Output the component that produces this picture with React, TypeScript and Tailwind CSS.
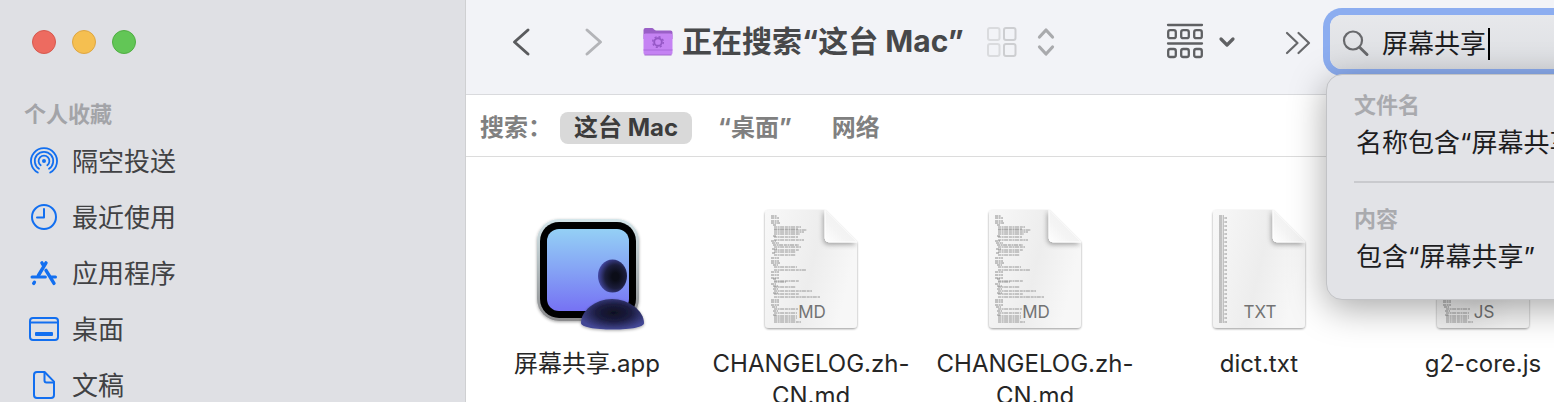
import { useState } from "react";
import type { ReactNode } from "react";
import { clsx } from "clsx";

type FileKind = "MD" | "TXT" | "JS";

const favorites = [
  { id: "airdrop", name: "隔空投送", icon: <AirDropIcon /> },
  { id: "recents", name: "最近使用", icon: <ClockIcon /> },
  { id: "apps", name: "应用程序", icon: <AppsIcon /> },
  { id: "desktop", name: "桌面", icon: <DesktopIcon /> },
  { id: "documents", name: "文稿", icon: <DocumentIcon /> },
];

const scopes = ["这台 Mac", "“桌面”", "网络"];

const files: { id: number; name: string; kind?: FileKind }[] = [
  { id: 1, name: "屏幕共享.app" },
  { id: 2, name: "CHANGELOG.zh-CN.md", kind: "MD" },
  { id: 3, name: "CHANGELOG.zh-CN.md", kind: "MD" },
  { id: 4, name: "dict.txt", kind: "TXT" },
  { id: 5, name: "g2-core.js", kind: "JS" },
];

// [x, y, width] of every line in the page preview
const mdLines = [
  [6, 6, 6], [6, 8, 8], [6, 11, 8], [6, 13, 9], [8, 15, 3],
  [9, 17, 27], [9, 19, 24], [9, 20, 33], [9, 22, 30], [9, 24, 26], [8, 26, 3],
  [9, 27, 24], [9, 30, 30], [6, 31, 5], [7, 33, 7], [8, 35, 26], [9, 37, 27],
  [7, 39, 5], [9, 40, 25], [9, 42, 22], [7, 43, 3], [9, 45, 22],
  [6, 48, 8], [6, 51, 8], [6, 53, 9], [8, 55, 5], [9, 57, 23], [9, 60, 32],
  [6, 62, 8], [6, 65, 8], [6, 68, 8], [8, 69, 3], [9, 71, 25], [9, 72, 12], [6, 74, 5],
  [8, 76, 5], [9, 77, 22], [8, 79, 5], [9, 81, 38], [8, 83, 5], [9, 84, 25], [9, 87, 46],
  [6, 90, 8], [6, 92, 8], [6, 95, 8], [7, 97, 5], [9, 99, 24], [8, 101, 5],
  [9, 103, 23], [8, 105, 4], [9, 106, 23], [9, 108, 23], [9, 110, 22], [9, 112, 27],
];

function AirDropIcon() {
  return (
    <svg viewBox="0 0 30 30" className="size-[30px]" fill="none" stroke="currentColor" strokeWidth="1.8" strokeLinecap="round">
      <path d="M8.800 26.500a13 13 0 1 1 12.400 0" />
      <path d="M10 22.700a9.200 9.200 0 1 1 10 0" />
      <path d="M11.700 19.300a5.400 5.400 0 1 1 6.600 0" />
      <circle cx="15" cy="15" r="2" fill="currentColor" stroke="none" />
    </svg>
  );
}

function ClockIcon() {
  return (
    <svg viewBox="0 0 30 30" className="size-[30px]" fill="none" stroke="currentColor" strokeWidth="2" strokeLinecap="round" strokeLinejoin="round">
      <circle cx="15" cy="15" r="12" />
      <path d="M15 7v8.600H8" />
    </svg>
  );
}

function AppsIcon() {
  return (
    <svg viewBox="0 0 30 30" className="size-[30px]" fill="none" stroke="currentColor" strokeWidth="3.400" strokeLinecap="round">
      <path d="M12.900 4.900l2 3.200M17 4.900L9.400 17.500" />
      <path d="M3 19h13.400" strokeWidth="3" />
      <path d="M17 12.400l8 13" />
      <path d="M22.500 19H26.500" strokeWidth="3" />
      <path d="M5.400 24.300l-.7 1.100" />
    </svg>
  );
}

function DesktopIcon() {
  return (
    <svg viewBox="0 0 30 30" className="size-[30px]" fill="none" stroke="currentColor" strokeWidth="2">
      <rect x="1" y="4" width="28" height="22" rx="3" />
      <path d="M1 8.500h28" />
      <rect x="6" y="18" width="18" height="4" rx="1" fill="currentColor" stroke="none" />
    </svg>
  );
}

function DocumentIcon() {
  return (
    <svg viewBox="0 0 30 30" className="size-[30px]" fill="none" stroke="currentColor" strokeWidth="2" strokeLinejoin="round">
      <path d="M15.600 2H8a3 3 0 0 0-3 3v20a3 3 0 0 0 3 3h14a3 3 0 0 0 3-3V11.600z" />
      <path d="M15.500 2v8.500a2 2 0 0 0 2 2H25" />
    </svg>
  );
}

function FolderIcon() {
  return (
    <svg viewBox="0 0 32 30" className="h-[30px] w-8 shrink-0">
      <path d="M1.500 3a2 2 0 0 1 2-2h6.500c1.500 0 2.200 2.400 4 2.400h14.500a2 2 0 0 1 2 2V12h-29z" fill="#9a5fc7" />
      <rect x="1.500" y="6.500" width="29" height="21.500" rx="2" fill="#c583f3" />
      <path d="M1.500 23h29" stroke="#aa6bdb" strokeWidth="1" />
      <path d="M2.500 28h27" stroke="#a46bce" strokeWidth="1" />
      <circle cx="16" cy="15" r="3.800" fill="none" stroke="#9557c6" strokeWidth="1.900" />
      <circle cx="16" cy="15" r="5.300" fill="none" stroke="#9557c6" strokeWidth="1.400" strokeDasharray="2.080 2.080" />
    </svg>
  );
}

function ScreenSharingIcon() {
  return (
    <svg viewBox="0 0 128 128" className="size-32">
      <defs>
        <linearGradient id="frame" x1="0" y1="0" x2="0" y2="1">
          <stop offset="0" stopColor="#d5e6ea" />
          <stop offset="1" stopColor="#8b8b8d" />
        </linearGradient>
        <linearGradient id="screen" x1="0" y1="0" x2="0" y2="1">
          <stop offset="0" stopColor="#94d0f5" />
          <stop offset="0.500" stopColor="#85a3f5" />
          <stop offset="1" stopColor="#7672f4" />
        </linearGradient>
        <radialGradient id="head" cx="0.600" cy="0.520" r="0.600">
          <stop offset="0.200" stopColor="#0b0d18" />
          <stop offset="0.600" stopColor="#1b1d3c" />
          <stop offset="1" stopColor="#4549a6" />
        </radialGradient>
        <radialGradient id="body" cx="0.520" cy="0.450" r="0.560">
          <stop offset="0" stopColor="#0f1022" />
          <stop offset="0.500" stopColor="#1c1d42" />
          <stop offset="1" stopColor="#434794" />
        </radialGradient>
        <filter id="drop" x="-20%" y="-20%" width="140%" height="140%">
          <feDropShadow dx="0" dy="1" stdDeviation="1.500" floodOpacity="0.350" />
        </filter>
      </defs>
      <rect x="14" y="13" width="102" height="102" rx="22" fill="url(#frame)" filter="url(#drop)" />
      <rect x="17" y="16" width="96" height="96" rx="19" fill="#000" />
      <rect x="24" y="23" width="82" height="82" rx="12" fill="url(#screen)" />
      <ellipse cx="89.500" cy="70" rx="14.500" ry="16.500" fill="url(#head)" />
      <path d="M58 117c0-12 14-24 31-24s32 12 32 24c0 4-12 6.500-31 6.500S58 121 58 117z" fill="url(#body)" filter="url(#drop)" />
    </svg>
  );
}

function PagePreview({ kind }: { kind: FileKind }) {
  const narrow = Array.from({ length: 54 }, (_, i) => [6, 6 + i * 2, 5 + ((i * i * 3) % 4)]);
  const lines = kind === "TXT" ? narrow : mdLines;

  return (
    <svg viewBox="0 0 100 128" className="h-32 w-[100px]">
      <defs>
        <linearGradient id={`paper-${kind}`} x1="0" y1="0" x2="1" y2="0.300">
          <stop offset="0" stopColor="#f8f8f8" />
          <stop offset="0.600" stopColor="#ededed" />
          <stop offset="1" stopColor="#f7f7f7" />
        </linearGradient>
        <linearGradient id={`fold-${kind}`} x1="0.700" y1="0.300" x2="0" y2="1">
          <stop offset="0" stopColor="#f1f1f1" />
          <stop offset="0.500" stopColor="#f4f4f4" />
          <stop offset="1" stopColor="#ffffff" />
        </linearGradient>
        <filter id={`edge-${kind}`} x="-10%" y="-10%" width="120%" height="120%">
          <feDropShadow dx="0" dy="1" stdDeviation="1" floodOpacity="0.400" />
        </filter>
        <clipPath id={`sheet-${kind}`}>
          <path d="M4 4H64L96 36V122H4z" />
        </clipPath>
        <filter id={`curl-${kind}`} x="-50%" y="-50%" width="200%" height="200%">
          <feDropShadow dx="-1" dy="2" stdDeviation="2.500" floodOpacity="0.350" />
        </filter>
      </defs>
      <path d="M8 4H64L96 36V118a4 4 0 0 1-4 4H8a4 4 0 0 1-4-4V8a4 4 0 0 1 4-4z" fill={`url(#paper-${kind})`} filter={`url(#edge-${kind})`} />
      {lines.map(([x, y, width], index) => (
        <path
          key={index}
          d={`M${x + 4} ${y + 4}h${width}`}
          stroke={x > 8 ? "#808080" : "#757575"}
          strokeWidth="0.800"
          strokeDasharray="3 0.600 2 0.500 4 0.800"
        />
      ))}
      <g clipPath={`url(#sheet-${kind})`}>
        <path d="M64 4L96 36H68a4 4 0 0 1-4-4z" fill={`url(#fold-${kind})`} stroke="#ffffff" filter={`url(#curl-${kind})`} />
      </g>
      <text x="51" y="112" textAnchor="middle" fontSize="17" fill="#737373">
        {kind}
      </text>
    </svg>
  );
}

function ToolButton({ label, className, children }: { label: string; className?: string; children: ReactNode }) {
  return (
    <button type="button" aria-label={label} className={clsx("flex shrink-0 items-center", className)}>
      {children}
    </button>
  );
}

function Sidebar() {
  return (
    <aside className="w-[466px] shrink-0 border-r border-[#cfd0d2] bg-[#dfe0e4]">
      <div className="flex gap-4 px-8 pt-[30px]">
        <button type="button" aria-label="关闭" className="size-6 rounded-full border border-[#d6594e] bg-[#ed6b60]" />
        <button type="button" aria-label="最小化" className="size-6 rounded-full border border-[#dea642] bg-[#f5bf50]" />
        <button type="button" aria-label="缩放" className="size-6 rounded-full border border-[#50ae43] bg-[#62c656]" />
      </div>
      <h2 className="mt-11 px-6 text-[22px] leading-8 font-bold text-[#a3a4a8]">个人收藏</h2>
      <nav className="mt-[3px]">
        {favorites.map((item) => (
          <a key={item.id} href={`#${item.id}`} className="flex h-14 items-center gap-[13px] px-[29px] text-[26px] text-[#414244]">
            <span className="text-[#126ff0]">{item.icon}</span>
            {item.name}
          </a>
        ))}
      </nav>
    </aside>
  );
}

function SearchField() {
  const [query, setQuery] = useState("屏幕共享");

  // the field and its menu run on past the right edge of the window
  return (
    <div className="relative ml-[18px] w-56 shrink-0">
      <label className="flex h-[54px] w-[420px] items-center gap-3 rounded-xl bg-linear-to-b from-[#e7e8eb] to-[#dddfe3] pt-1 pl-3 ring-[7px] ring-[#8cadf0]">
        <svg viewBox="0 0 28 28" className="size-7 shrink-0" fill="none" stroke="#68696c" strokeWidth="2.200" strokeLinecap="round">
          <circle cx="11" cy="10.500" r="9" />
          <path d="M17.800 17.500L25 24.500" strokeWidth="3" />
        </svg>
        <span className="sr-only">搜索</span>
        <span className="flex items-center">
          <input value={query} onChange={(e) => setQuery(e.target.value)} className="w-[106px] bg-transparent text-[26px] text-[#1d1d1f] outline-none" />
          <span className="h-8 w-0.5 bg-black" />
        </span>
      </label>
      <div className="absolute top-[59px] -left-1 z-10 w-[440px] rounded-2xl border border-[#c2c3c6] bg-[#e2e3e7] px-[27px] pt-3.5 pb-5 shadow-[0_8px_36px_rgba(0,0,0,0.35)]">
        <h3 className="text-[22px] leading-8 font-bold text-[#a9aaae]">文件名</h3>
        <button type="button" className="block px-0.5 text-[26px] leading-[44px] whitespace-nowrap text-[#1d1d1f]">名称包含“屏幕共享”</button>
        <hr className="my-4 border-t-2 border-[#c9cace]" />
        <h3 className="mt-5 text-[22px] leading-8 font-bold text-[#a9aaae]">内容</h3>
        <button type="button" className="block px-0.5 text-[26px] leading-[44px] whitespace-nowrap text-[#1d1d1f]">包含“屏幕共享”</button>
      </div>
    </div>
  );
}

function Toolbar() {
  return (
    <header className="flex h-[95px] items-center border-b border-[#d9dadd] bg-[#f2f3f7] pb-[11px]">
      <ToolButton label="后退" className="ml-11">
        <svg viewBox="0 0 24 32" className="h-8 w-6" fill="none" stroke="#5a5b5e" strokeWidth="3" strokeLinecap="round" strokeLinejoin="round">
          <path d="M18 4L4.500 16L18 28" />
        </svg>
      </ToolButton>
      <ToolButton label="前进" className="ml-12">
        <svg viewBox="0 0 24 32" className="h-8 w-6" fill="none" stroke="#b3b4b8" strokeWidth="3" strokeLinecap="round" strokeLinejoin="round">
          <path d="M5 4L18.500 16L5 28" />
        </svg>
      </ToolButton>
      <h1 className="ml-9 flex shrink-0 items-center gap-2 text-[30px] font-bold text-[#47484a]">
        <FolderIcon />
        正在搜索“这台 Mac”
      </h1>
      <ToolButton label="显示方式" className="ml-[22px] gap-[18px]">
        <svg viewBox="0 0 32 32" className="size-8" fill="none" strokeWidth="2">
          <g stroke="#dadbde">
            <rect x="2" y="2" width="11.500" height="12" rx="2" />
            <rect x="2" y="18" width="11.500" height="12" rx="2" />
          </g>
          <g stroke="#cdced1">
            <rect x="18" y="2" width="11.500" height="12" rx="2" />
            <rect x="18" y="18" width="11.500" height="12" rx="2" />
          </g>
        </svg>
        <svg viewBox="0 0 20 32" className="h-8 w-5" fill="none" stroke="#a9aaad" strokeWidth="3.200" strokeLinecap="round" strokeLinejoin="round">
          <path d="M3.500 11L10 4l6.500 7M3.500 21l6.500 7 6.500-7" />
        </svg>
      </ToolButton>
      <ToolButton label="分组" className="ml-auto gap-3.5">
        <svg viewBox="0 0 38 40" className="h-10 w-[38px]" fill="none" stroke="#5f6063" strokeWidth="2.300" strokeLinecap="round">
          <path d="M2 3h34M2 21.500h34" />
          <rect x="2.200" y="8.200" width="7.600" height="8" rx="2" />
          <rect x="15.200" y="8.200" width="7.600" height="8" rx="2" />
          <rect x="28.200" y="8.200" width="7.600" height="8" rx="2" />
          <rect x="2.200" y="27" width="7.600" height="8" rx="2" />
          <rect x="15.200" y="27" width="7.600" height="8" rx="2" />
          <rect x="28.200" y="27" width="7.600" height="8" rx="2" />
        </svg>
        <svg viewBox="0 0 18 12" className="h-3 w-[18px]" fill="none" stroke="#5f6063" strokeWidth="3.200" strokeLinecap="round" strokeLinejoin="round">
          <path d="M3 3L9 9l6-6" />
        </svg>
      </ToolButton>
      <ToolButton label="更多工具" className="ml-12">
        <svg viewBox="0 0 28 28" className="size-7" fill="none" stroke="#67686b" strokeWidth="2.200" strokeLinecap="round" strokeLinejoin="round">
          <path d="M3 5L13.500 15L3 25M14.500 5L25 15L14.500 25" />
        </svg>
      </ToolButton>
      <SearchField />
    </header>
  );
}

function ScopeBar() {
  const [scope, setScope] = useState(scopes[0]);

  return (
    <div className="flex h-[62px] items-center border-b border-[#dcdcdc] pt-1 pr-4 pl-3.5 text-2xl font-bold text-[#808080]">
      <span className="mr-2">搜索：</span>
      {scopes.map((name) => (
        <button
          key={name}
          type="button"
          onClick={() => setScope(name)}
          className={clsx("mr-3 h-8 rounded-lg px-3.5 leading-8", name === scope && "bg-[#d9d9d9] text-[#3c3c3c]")}
        >
          {name}
        </button>
      ))}
    </div>
  );
}

export default function App() {
  return (
    <div className="flex h-screen overflow-hidden bg-white font-[Inter,'Noto_Sans_CJK_SC',sans-serif]">
      <Sidebar />
      <main className="min-w-0 flex-1">
        <Toolbar />
        <ScopeBar />
        <ul className="flex pt-[49px] pl-[9px]">
          {files.map((file) => (
            <li key={file.id} className="flex w-56 shrink-0 flex-col items-center">
              {file.kind ? <PagePreview kind={file.kind} /> : <ScreenSharingIcon />}
              <span className="mt-3.5 px-3 text-center text-2xl text-[#262626]">{file.name}</span>
            </li>
          ))}
        </ul>
      </main>
    </div>
  );
}
